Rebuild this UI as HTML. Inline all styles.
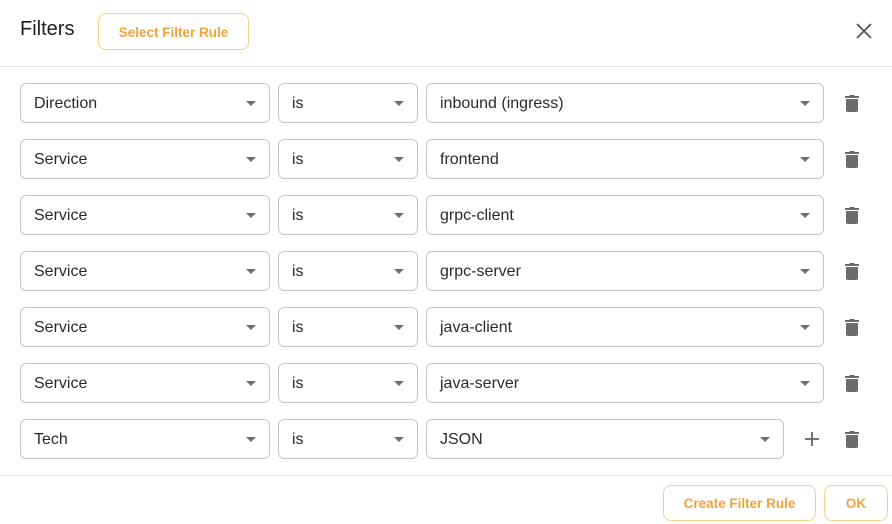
<!DOCTYPE html>
<html><head><style>
*{box-sizing:border-box;margin:0;padding:0}
body{width:892px;height:524px;background:#fff;font-family:"Liberation Sans",sans-serif;position:relative;overflow:hidden;color:#222}
.abs{position:absolute}
.title{left:20px;top:18px;font-size:20px;color:#1e1e1e}
.btn{position:absolute;border:1px solid #f6cf8a;border-radius:8px;color:#eea43a;font-size:13.5px;font-weight:bold;display:flex;align-items:center;justify-content:center;background:#fff;padding-top:1px}
.hr{position:absolute;left:0;width:892px;height:1px;background:#e4e4e4}
.sel{position:absolute;height:40px;border:1px solid #c4c4c4;border-radius:6px;font-size:16px;color:#2a2a2a;padding-left:13px;line-height:40px}
.sel:after{content:"";position:absolute;right:13px;top:17px;border-left:5px solid transparent;border-right:5px solid transparent;border-top:5px solid #6f6f6f}
.trash{position:absolute;left:845px;width:14px;height:18px}
</style></head><body>
<div class="abs title">Filters</div>
<div class="btn" style="left:98px;top:13px;width:151px;height:37px">Select Filter Rule</div>
<svg class="abs" style="left:855px;top:22px" width="18" height="18" viewBox="0 0 18 18"><path d="M2 2L16 16M16 2L2 16" stroke="#555" stroke-width="1.8"/></svg>
<div class="hr" style="top:66px"></div>

<div class="sel" style="left:20px;top:83px;width:250px">Direction</div>
<div class="sel" style="left:278px;top:83px;width:140px">is</div>
<div class="sel" style="left:426px;top:83px;width:398px">inbound (ingress)</div>

<div class="sel" style="left:20px;top:139px;width:250px">Service</div>
<div class="sel" style="left:278px;top:139px;width:140px">is</div>
<div class="sel" style="left:426px;top:139px;width:398px">frontend</div>

<div class="sel" style="left:20px;top:195px;width:250px">Service</div>
<div class="sel" style="left:278px;top:195px;width:140px">is</div>
<div class="sel" style="left:426px;top:195px;width:398px">grpc-client</div>

<div class="sel" style="left:20px;top:251px;width:250px">Service</div>
<div class="sel" style="left:278px;top:251px;width:140px">is</div>
<div class="sel" style="left:426px;top:251px;width:398px">grpc-server</div>

<div class="sel" style="left:20px;top:307px;width:250px">Service</div>
<div class="sel" style="left:278px;top:307px;width:140px">is</div>
<div class="sel" style="left:426px;top:307px;width:398px">java-client</div>

<div class="sel" style="left:20px;top:363px;width:250px">Service</div>
<div class="sel" style="left:278px;top:363px;width:140px">is</div>
<div class="sel" style="left:426px;top:363px;width:398px">java-server</div>

<div class="sel" style="left:20px;top:419px;width:250px">Tech</div>
<div class="sel" style="left:278px;top:419px;width:140px">is</div>
<div class="sel" style="left:426px;top:419px;width:358px">JSON</div>
<svg class="abs" style="left:804px;top:431px" width="16" height="16" viewBox="0 0 16 16"><path d="M8 1V15M1 8H15" stroke="#666" stroke-width="1.8"/></svg>

<svg class="trash" style="top:94px" viewBox="0 0 14 18"><path d="M0 2H4L5 1H9L10 2H14V4H0Z M1 5H13V16Q13 18 11 18H3Q1 18 1 16Z" fill="#6b6b6b"/></svg>
<svg class="trash" style="top:150px" viewBox="0 0 14 18"><path d="M0 2H4L5 1H9L10 2H14V4H0Z M1 5H13V16Q13 18 11 18H3Q1 18 1 16Z" fill="#6b6b6b"/></svg>
<svg class="trash" style="top:206px" viewBox="0 0 14 18"><path d="M0 2H4L5 1H9L10 2H14V4H0Z M1 5H13V16Q13 18 11 18H3Q1 18 1 16Z" fill="#6b6b6b"/></svg>
<svg class="trash" style="top:262px" viewBox="0 0 14 18"><path d="M0 2H4L5 1H9L10 2H14V4H0Z M1 5H13V16Q13 18 11 18H3Q1 18 1 16Z" fill="#6b6b6b"/></svg>
<svg class="trash" style="top:318px" viewBox="0 0 14 18"><path d="M0 2H4L5 1H9L10 2H14V4H0Z M1 5H13V16Q13 18 11 18H3Q1 18 1 16Z" fill="#6b6b6b"/></svg>
<svg class="trash" style="top:374px" viewBox="0 0 14 18"><path d="M0 2H4L5 1H9L10 2H14V4H0Z M1 5H13V16Q13 18 11 18H3Q1 18 1 16Z" fill="#6b6b6b"/></svg>
<svg class="trash" style="top:430px" viewBox="0 0 14 18"><path d="M0 2H4L5 1H9L10 2H14V4H0Z M1 5H13V16Q13 18 11 18H3Q1 18 1 16Z" fill="#6b6b6b"/></svg>

<div class="hr" style="top:475px"></div>
<div class="btn" style="left:663px;top:485px;width:153px;height:36px">Create Filter Rule</div>
<div class="btn" style="left:824px;top:485px;width:64px;height:36px">OK</div>
</body></html>
